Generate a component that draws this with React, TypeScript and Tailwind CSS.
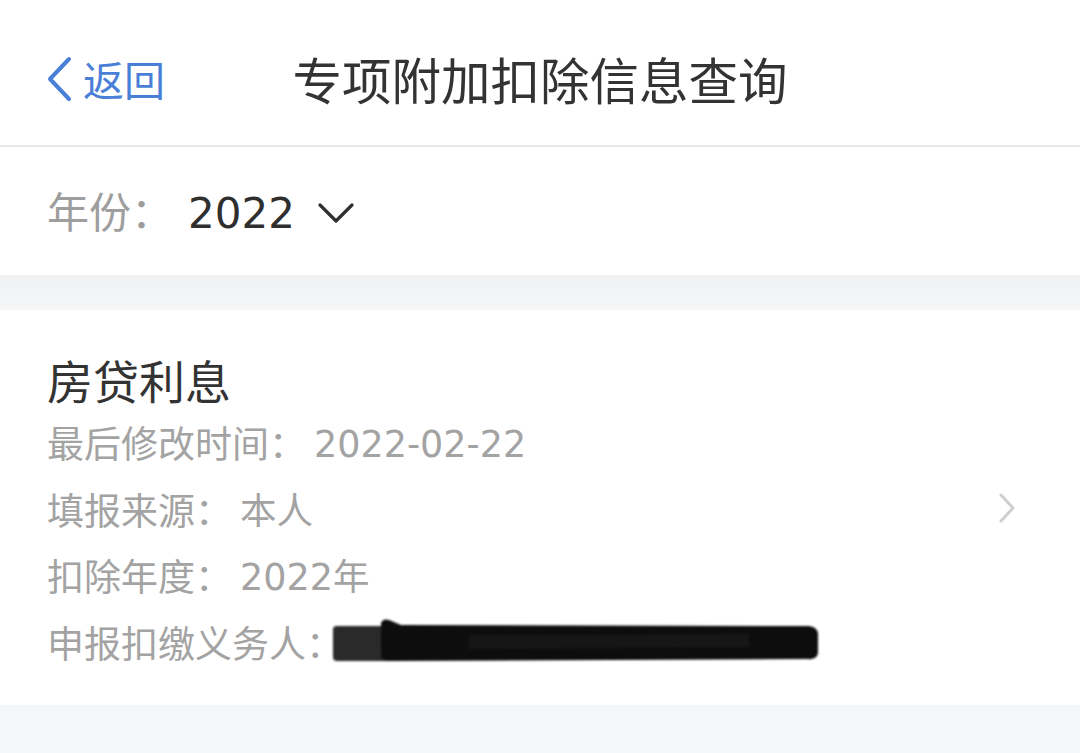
import React from 'react'

const font = { fontFamily: '"Noto Sans CJK SC", "Noto Sans", sans-serif' }
const digits = { fontFamily: '"DejaVu Sans", "Noto Sans CJK SC", sans-serif' }

function BackChevron() {
  return (
    <svg width="28" height="46" viewBox="0 0 28 46" fill="none">
      <path d="M24 3 L5 23 L24 43" stroke="#4a7fd8" strokeWidth="4" strokeLinecap="round" strokeLinejoin="round" />
    </svg>
  )
}

function Redaction() {
  // scribbled-over text, drawn as a blob
  return (
    <svg width="492" height="50" viewBox="0 0 492 50" className="-ml-[14px]" style={{ filter: 'blur(1.2px)' }}>
      <path d="M4 12 Q4 9 8 9 L60 9 L60 44 L8 44 Q4 44 4 40 Z" fill="#2a2a2a" />
      <path d="M52 6 Q54 1 60 3 L72 8 L480 9 Q490 10 489 20 L489 36 Q488 43 478 42 L60 44 Q52 44 52 38 Z" fill="#0d0d0d" />
      <path d="M140 18 L420 17 L420 30 L140 32 Z" fill="#1c1c1c" opacity="0.6" />
    </svg>
  )
}

function InfoLine({ label, value }: { label: string; value?: string }) {
  return (
    <div className="flex items-center h-[66.5px] text-[37px] leading-[66.5px] text-[#a3a3a3]">
      <span>{label}：</span>
      {value ? <span className="ml-[8px] pt-[6px] text-[36.5px] leading-none" style={digits}>{value}</span> : <Redaction />}
    </div>
  )
}

export default function App() {
  return (
    <main className="w-[1080px] h-[753px] overflow-hidden bg-[#f5f6f8]" style={font}>
      <header className="h-[147px] bg-white border-b-2 border-[#e7e7e9] grid grid-cols-[1fr_auto_1fr] items-center">
        <div className="flex items-center pl-[45px] gap-[10px] pt-[12px]">
          <BackChevron />
          <span className="text-[41px] leading-none text-[#4a7fd8]">返回</span>
        </div>
        <h1 className="text-[49.5px] leading-none text-[#333333] pt-[12px]">专项附加扣除信息查询</h1>
        <div />
      </header>

      <section className="h-[128px] bg-white flex items-center px-[47px] pb-[2px]">
        <span className="text-[42px] leading-none text-[#9e9e9e]">年份：</span>
        <span className="ml-[15px] pt-[8px] text-[42px] leading-none text-[#2f2f2f]" style={digits}>2022</span>
        <svg width="38" height="24" viewBox="0 0 38 24" fill="none" className="ml-[22px] mt-[6px]">
          <path d="M3 4 L19 20 L35 4" stroke="#2f2f2f" strokeWidth="3.2" strokeLinecap="round" strokeLinejoin="round" />
        </svg>
      </section>

      <div className="h-[35px] bg-gradient-to-b from-[#f0f1f3] to-[#f6f7f9]" />

      <section className="bg-white flex items-center pr-[64px]">
        <div className="flex-1 pl-[47px] pt-[39px] pb-[30px]">
          <h2 className="text-[46px] leading-[60px] text-[#333333]">房贷利息</h2>
          <InfoLine label="最后修改时间" value="2022-02-22" />
          <InfoLine label="填报来源" value="本人" />
          <InfoLine label="扣除年度" value="2022年" />
          <InfoLine label="申报扣缴义务人" />
        </div>
        <svg width="18" height="32" viewBox="0 0 18 32" fill="none">
          <path d="M3 3 L15 16 L3 29" stroke="#cfcfcf" strokeWidth="3" strokeLinecap="round" strokeLinejoin="round" />
        </svg>
      </section>
    </main>
  )
}
